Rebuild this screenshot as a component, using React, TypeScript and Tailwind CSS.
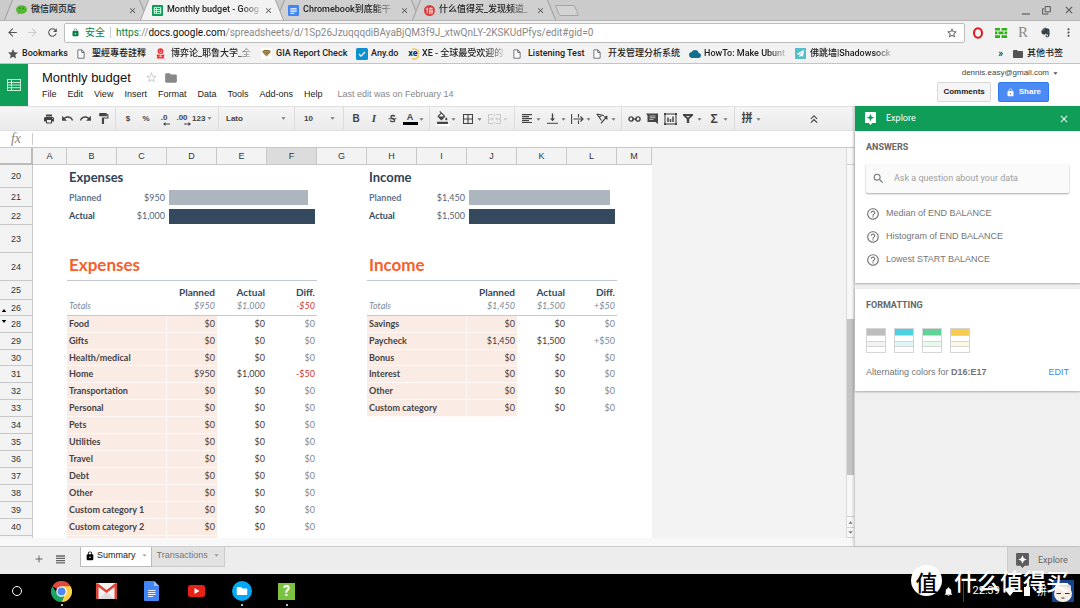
import React from "react";
import {
  MdAdd,
  MdArrowBack,
  MdArrowForward,
  MdClose,
  MdCloud,
  MdFolder,
  MdFormatColorFill,
  MdFormatPaint,
  MdHelpOutline,
  MdKeyboardDoubleArrowUp,
  MdLock,
  MdMoreVert,
  MdNotifications,
  MdPrint,
  MdRedo,
  MdRefresh,
  MdSearch,
  MdStar,
  MdStarBorder,
  MdUndo,
} from "react-icons/md";
import { FaEvernote, FaPaperPlane } from "react-icons/fa";

const chromeFont = "font-[Roboto,'Noto_Sans_CJK_SC',sans-serif]";
const docsFont = "font-['Liberation_Sans','Noto_Sans_CJK_SC',sans-serif]";
const sheetFont = "font-[Lato,sans-serif]";
const fade = "[mask-image:linear-gradient(to_right,black_80%,rgba(0,0,0,0.2))]";

/* ---------- Small drawings ---------- */

function Caret({ className = "text-[#777]" }: { className?: string }) {
  return (
    <svg viewBox="0 0 6 3" className={"h-[3px] w-[5px] shrink-0 fill-current " + className} aria-hidden="true">
      <path d="M0.5 0h5L3 3z" />
    </svg>
  );
}

function WechatIcon() {
  return (
    <svg viewBox="0 0 22 20" className="h-[10px] w-[11px]" aria-hidden="true">
      <ellipse cx="11" cy="9" rx="11" ry="8.5" fill="#54b635" />
      <path d="M4 15l-1 4 6-2z" fill="#54b635" />
      <circle cx="7.5" cy="6.5" r="1.5" fill="#2f6b1c" />
      <circle cx="14.5" cy="6.5" r="1.5" fill="#2f6b1c" />
    </svg>
  );
}

function SheetsFavicon() {
  return (
    <svg viewBox="0 0 12 12" className="size-[11px]" aria-hidden="true">
      <rect width="12" height="12" rx="1" fill="#0f9d58" />
      <path d="M2 2.5h8v7H2z" fill="#fff" />
      <path d="M3 3.4h1.6v1.2H3zM5.4 3.4H9v1.2H5.4zM3 5.4h1.6v1.2H3zM5.4 5.4H9v1.2H5.4zM3 7.4h1.6v1.2H3zM5.4 7.4H9v1.2H5.4z" fill="#0f9d58" />
    </svg>
  );
}

function DocsFavicon() {
  return (
    <svg viewBox="0 0 12 12" className="size-[11px]" aria-hidden="true">
      <rect width="12" height="12" rx="1" fill="#4285f4" />
      <path d="M2.5 3.5h7v1.3h-7zM2.5 6h7v1.3h-7zM2.5 8.5h4.5v1h-4.5z" fill="#fff" />
    </svg>
  );
}

function SealIcon() {
  return (
    <svg viewBox="0 0 12 12" className="size-[11px]" fill="none" stroke="#fff" strokeWidth="0.8" aria-hidden="true">
      <circle cx="6" cy="6" r="6" fill="#d8403f" stroke="none" />
      <path d="M3.5 3v6M2.5 4.5h2M5.5 4h4M6 5.5h3v3.5h-3zM6 7.2h3M7.5 2.5v1.5" />
    </svg>
  );
}

function PageIcon() {
  return (
    <svg viewBox="0 0 9 11" className="h-[10px] w-[8px]" fill="#fff" stroke="#5f6368" strokeWidth="1" aria-hidden="true">
      <path d="M1 0.8h4.5L8 3.5v6.7H1zM5.3 0.8v3H8" />
    </svg>
  );
}

function RedBlob() {
  return (
    <svg viewBox="0 0 10 12" className="h-[11px] w-[9px]" aria-hidden="true">
      <circle cx="5" cy="3.5" r="3.2" fill="#e33" />
      <path d="M0.5 7.5L3 7l2 1.5L7 7l2.5.5L8.5 10l1 1.5h-9l1-1.5z" fill="#e33" />
      <path d="M3.5 3h1M5.7 3h1M3.5 9.5h3M4 5h2" stroke="#fff" strokeWidth="0.8" />
    </svg>
  );
}

function GemIcon() {
  return (
    <svg viewBox="0 0 11 11" className="size-[11px]" aria-hidden="true">
      <rect width="11" height="11" fill="#fff" />
      <path d="M1 3.8L3 2h5l2 1.8L5.5 8.5z" fill="#8a6a2f" />
      <path d="M1 3.8h9M3.7 3.8l1.8 4.5 1.8-4.5" stroke="#d8bd85" strokeWidth="0.5" fill="none" />
    </svg>
  );
}

function AnydoIcon() {
  return (
    <svg viewBox="0 0 12 12" className="size-[12px]" aria-hidden="true">
      <rect width="12" height="12" rx="1.5" fill="#0d8fd0" />
      <path d="M3 6l2 2.2L9 4" fill="none" stroke="#fff" strokeWidth="1.2" />
    </svg>
  );
}

function XeIcon() {
  return (
    <span className="relative flex h-3 w-3 items-center justify-center">
      <svg viewBox="0 0 12 12" className="absolute inset-0" aria-hidden="true">
        <path d="M5 1.5a5 5 0 1 1 0 9" fill="none" stroke="#f0c14b" strokeWidth="1.3" />
      </svg>
      <span className="relative text-[9px] leading-none font-bold text-[#0a2a5e]">xe</span>
    </span>
  );
}

function SheetsMark() {
  return (
    <svg viewBox="0 0 14 12" className="h-[12px] w-[14px]" fill="none" stroke="#c9ecd9" strokeWidth="1" aria-hidden="true">
      <rect x="0.5" y="0.5" width="13" height="11" />
      <path d="M0.5 3.5h13M0.5 6h13M0.5 8.7h13M4.5 0.5v11" />
    </svg>
  );
}

function ExploreMark({ body, star, className }: { body: string; star: string; className: string }) {
  return (
    <svg viewBox="0 0 12 14" className={className} aria-hidden="true">
      <path d="M1 0h10a1 1 0 0 1 1 1v10a1 1 0 0 1-1 1H8l-2 2-2-2H1a1 1 0 0 1-1-1V1a1 1 0 0 1 1-1z" fill={body} />
      <path d="M6 2l1.2 2.8L10 6 7.2 7.2 6 10 4.8 7.2 2 6l2.8-1.2z" fill={star} />
    </svg>
  );
}

function DecimalIcon({ text, back }: { text: string; back: boolean }) {
  return (
    <span className="relative flex h-3 flex-col items-center text-[8px] leading-[9px] font-bold">
      {text}
      <svg viewBox="0 0 7 4" className="absolute right-[-3px] bottom-[-1px] h-[4px] w-[7px] fill-current" aria-hidden="true">
        {back ? <path d="M0 2l2.5-2v1.4H7v1.2H2.5V4z" /> : <path d="M7 2L4.5 0v1.4H0v1.2h4.5V4z" />}
      </svg>
    </span>
  );
}

const stroke = { fill: "none", stroke: "currentColor", strokeWidth: 1.1 } as const;

function StrikeIcon() {
  return (
    <svg viewBox="0 0 10 10" className="size-[9px]" {...stroke} strokeWidth={1.5} aria-hidden="true">
      <path d="M7.5 2.7C7 1.3 3.2 1.3 3.2 3.2S7.3 5.3 7.3 7.1 3.2 8.9 2.5 7.2" />
      <path d="M0.5 5.3h9" strokeWidth={1} />
    </svg>
  );
}

function BordersIcon() {
  return (
    <svg viewBox="0 0 10 10" className="size-[10px]" {...stroke} aria-hidden="true">
      <path d="M0.5 0.5h9v9h-9zM5 0.5v9M0.5 5h9" />
    </svg>
  );
}

function MergeIcon() {
  return (
    <svg viewBox="0 0 13 10" className="h-[10px] w-[13px]" {...stroke} strokeWidth={0.9} aria-hidden="true">
      <path d="M5 0.5H0.5v9H5M8 0.5h4.5v9H8M6.5 0v2M6.5 8v2M1 5h4M12 5H8M3.8 3.5L5.3 5 3.8 6.5M9.2 3.5L7.7 5l1.5 1.5" />
    </svg>
  );
}

function AlignIcon() {
  return (
    <svg viewBox="0 0 10 9" className="h-[9px] w-[10px]" {...stroke} aria-hidden="true">
      <path d="M0 0.6h10M0 2.6h7M0 4.6h10M0 6.6h7M0 8.5h10" />
    </svg>
  );
}

function ValignIcon() {
  return (
    <svg viewBox="0 0 11 11" className="size-[11px]" {...stroke} strokeWidth={1.4} aria-hidden="true">
      <path d="M5.5 0.5v6.5" />
      <path d="M3 5.5h5L5.5 8.3z" fill="currentColor" stroke="none" />
      <path d="M0 10.3h11" strokeWidth={1} />
    </svg>
  );
}

function WrapIcon() {
  return (
    <svg viewBox="0 0 13 10" className="h-[10px] w-[13px]" {...stroke} aria-hidden="true">
      <path d="M0.6 0v10M2.5 5H12M7.5 0v3.5M7.5 6.5V10M9.5 2.5L12 5 9.5 7.5" />
    </svg>
  );
}

function RotateIcon() {
  return (
    <svg viewBox="0 0 12 11" className="h-[11px] w-[12px]" {...stroke} strokeWidth={1.2} aria-hidden="true">
      <path d="M0.8 1L5.5 7.5M0.8 1L8 2.5M3 4.2l3-2M5 10.3l5.5-6.5M7.8 4l3-0.5 0.2 3" />
    </svg>
  );
}

function LinkIcon() {
  return (
    <svg viewBox="0 0 14 8" className="h-[8px] w-[13px]" {...stroke} strokeWidth={1.5} aria-hidden="true">
      <rect x="1" y="1.7" width="4.6" height="4.6" rx="2.3" />
      <rect x="8.4" y="1.7" width="4.6" height="4.6" rx="2.3" />
      <path d="M4.5 4h5" />
    </svg>
  );
}

function CommentIcon() {
  return (
    <svg viewBox="0 0 12 11" className="h-[11px] w-[12px]" aria-hidden="true">
      <path d="M0 0.5h12V11L9.5 9H1.5V2.5z" fill="currentColor" />
      <path d="M3.5 3h6M3.5 4.7h6M3.5 6.4h4" stroke="#ddd" strokeWidth="0.8" />
    </svg>
  );
}

function ChartIcon() {
  return (
    <svg viewBox="0 0 13 12" className="h-[12px] w-[13px]" {...stroke} aria-hidden="true">
      <rect x="1" y="1" width="11" height="10" />
      <path d="M4 9V4.5M6.5 9V6M9 9V3.5" strokeWidth={1.5} />
      <path d="M0 0h2v2H0zM11 0h2v2h-2zM0 10h2v2H0zM11 10h2v2h-2z" fill="currentColor" stroke="none" />
    </svg>
  );
}

function FilterIcon() {
  return (
    <svg viewBox="0 0 10 9" className="h-[9px] w-[10px]" aria-hidden="true">
      <path d="M0 0h10v1.5L6.2 5v4H3.8V5L0 1.5z" fill="currentColor" />
      <path d="M3.2 2h3.6L5 3.8z" fill="#eee" />
    </svg>
  );
}

function OperaIcon() {
  return (
    <svg viewBox="0 0 12 12" className="size-[12px]" aria-hidden="true">
      <ellipse cx="6" cy="6" rx="4" ry="4.8" fill="none" stroke="#e3131b" strokeWidth="2" />
    </svg>
  );
}

function GreenGridIcon() {
  return (
    <svg viewBox="0 0 12 10" className="h-[10px] w-[12px]" aria-hidden="true">
      <path d="M0 0h5v2.6H0zM6.5 0H12v2.6H6.5zM0 3.6h2.5v2.6H0zM3.5 3.6h5v2.6h-5zM9.5 3.6H12v2.6H9.5zM0 7.2h5V10H0zM6.5 7.2H12V10H6.5z" fill="#2cb512" />
    </svg>
  );
}

/* ---------- Browser frame ---------- */

type Tab = { title: string; icon: React.ReactNode; active?: boolean };

const browserTabs: Tab[] = [
  { title: "微信网页版", icon: <WechatIcon /> },
  { title: "Monthly budget - Goog", icon: <SheetsFavicon />, active: true },
  { title: "Chromebook到底能干", icon: <DocsFavicon /> },
  { title: "什么值得买_发现频道_", icon: <SealIcon /> },
];

function BrowserTab({ title, icon, active }: Tab) {
  const side = active ? "before:bg-[#f2f2f2] after:bg-[#f2f2f2]" : "before:bg-[#d0d0d0] after:bg-[#d0d0d0]";
  return (
    <div
      className={
        "relative flex h-full w-[136px] items-center pr-[7px] pl-[8px] before:absolute before:inset-y-0 before:left-0 before:w-2/3 before:-skew-x-[22deg] before:border-l before:border-[#9c9c9c] after:absolute after:inset-y-0 after:right-0 after:w-2/3 after:skew-x-[22deg] after:border-r after:border-[#9c9c9c] " +
        side +
        (active ? " z-10" : "")
      }
    >
      <span className="relative z-10 mr-1 flex shrink-0">{icon}</span>
      <span className={"relative z-10 shrink-0 whitespace-nowrap text-[#222] " + (title.length > 5 ? fade : "")}>{title}</span>
      <button type="button" aria-label={"Close " + title} className="relative z-10 ml-auto text-[#555]">
        <MdClose className="size-[9px]" />
      </button>
    </div>
  );
}

function TabStrip() {
  return (
    <div className="flex h-[21px] shrink-0 items-stretch border-b border-[#b5b5b5] bg-[#cbcbcb] pl-2 text-[9px] font-medium">
      {browserTabs.map((t) => (
        <BrowserTab key={t.title} {...t} />
      ))}
      <button
        type="button"
        aria-label="New tab"
        className="ml-[5px] h-[11px] w-[20px] skew-x-[22deg] self-center rounded-xs border border-[#a5a5a5] bg-[#d3d3d3]"
      />
      <div className="ml-auto flex items-center gap-3 pr-[5px] text-[#555]">
        <button type="button" aria-label="Minimize" className="mt-[7px] h-[2px] w-[8px] bg-[#888]" />
        <button type="button" aria-label="Restore">
          <svg viewBox="0 0 10 10" className="size-[9px]" {...stroke} aria-hidden="true">
            <path d="M3.5 0.7h5.8v5.8H3.5zM2 3H0.7v6H6.5V8" />
          </svg>
        </button>
        <button type="button" aria-label="Close window">
          <MdClose className="size-[12px]" />
        </button>
      </div>
    </div>
  );
}

function AddressBar() {
  return (
    <div className="flex h-[23px] shrink-0 items-center bg-[#f2f2f2] pl-[6px] text-[#555]">
      <button type="button" aria-label="Back" className="w-[14px]">
        <MdArrowBack className="size-[13px]" />
      </button>
      <button type="button" aria-label="Forward" className="ml-[6px] w-[14px] text-[#ccc]">
        <MdArrowForward className="size-[13px]" />
      </button>
      <button type="button" aria-label="Reload" className="ml-[6px] w-[14px]">
        <MdRefresh className="size-[13px]" />
      </button>
      <div className="ml-1 flex h-[20px] min-w-0 flex-1 items-center rounded-xs border border-[#bdbdbd] bg-white px-[6px] text-[10px]">
        <MdLock className="size-[9px] shrink-0 text-[#0b8043]" />
        <span className="ml-[5px] shrink-0 text-[#0b8043]">安全</span>
        <span className="mx-[5px] h-[11px] w-px shrink-0 bg-[#ccc]" />
        <span className="min-w-0 flex-1 truncate text-[#888]">
          <span className="text-[#0b8043]">https</span>://<span className="text-[#111]">docs.google.com</span>
          /spreadsheets/d/1Sp26JzuqqqdiBAyaBjQM3f9J_xtwQnLY-2KSKUdPfys/edit#gid=0
        </span>
        <MdStarBorder className="size-[12px] shrink-0" />
      </div>
      <div className="flex items-center pl-[1px]">
        <button type="button" aria-label="Opera extension" className="flex w-[23px] justify-center">
          <OperaIcon />
        </button>
        <button type="button" aria-label="Grid extension" className="flex w-[23px] justify-center">
          <GreenGridIcon />
        </button>
        <button type="button" aria-label="Reader extension" className="w-[22px] font-['Liberation_Serif',serif] text-[15px] leading-none text-[#888]">
          R
        </button>
        <button type="button" aria-label="Evernote" className="flex w-[23px] justify-center text-[#333f44]">
          <FaEvernote className="size-[11px]" />
        </button>
        <button type="button" aria-label="Menu" className="flex w-[23px] justify-center">
          <MdMoreVert className="size-[13px]" />
        </button>
      </div>
    </div>
  );
}

const bookmarks: { title: string; icon: React.ReactNode; width: string; faded?: boolean }[] = [
  { title: "Bookmarks", icon: <MdStar className="size-[12px] text-[#555]" />, width: "w-[70px]" },
  { title: "聖經專卷註釋", icon: <PageIcon />, width: "w-[79px]" },
  { title: "博弈论_耶鲁大学_全", icon: <RedBlob />, width: "w-[105px]", faded: true },
  { title: "GIA Report Check", icon: <GemIcon />, width: "w-[95px]" },
  { title: "Any.do", icon: <AnydoIcon />, width: "w-[51px]" },
  { title: "XE - 全球最受欢迎的", icon: <XeIcon />, width: "w-[106px]", faded: true },
  { title: "Listening Test", icon: <PageIcon />, width: "w-[80px]" },
  { title: "开发管理分析系统", icon: <PageIcon />, width: "w-[96px]" },
  { title: "HowTo: Make Ubunt", icon: <MdCloud className="size-[12px] text-[#14708a]" />, width: "w-[106px]", faded: true },
  {
    title: "佛跳墙|Shadowsock",
    icon: (
      <span className="flex size-[11px] items-center justify-center bg-[#54bfc9] text-white">
        <FaPaperPlane className="size-[7px]" />
      </span>
    ),
    width: "w-[96px]",
    faded: true,
  },
];

function BookmarksBar() {
  return (
    <nav
      aria-label="Bookmarks"
      className="flex h-[20px] shrink-0 items-center border-b border-[#c4c4c4] bg-[#f2f2f2] pl-[7px] text-[9px] font-medium text-[#222]"
    >
      {bookmarks.map((b) => (
        <a key={b.title} href="#" className={"flex shrink-0 items-center " + b.width}>
          <span className="flex w-[15px] shrink-0">{b.icon}</span>
          <span className={"whitespace-nowrap " + (b.faded ? fade : "")}>{b.title}</span>
        </a>
      ))}
      <div className="ml-auto flex items-center pr-[17px]">
        <button type="button" aria-label="More bookmarks" className="mr-[9px] text-[10px] leading-none">
          »
        </button>
        <button type="button" className="flex items-center gap-[3px]">
          <MdFolder className="size-[12px] text-[#555]" />
          其他书签
        </button>
      </div>
    </nav>
  );
}

/* ---------- Document header and toolbar ---------- */

function DocHeader() {
  return (
    <header className="flex h-[42px] shrink-0 bg-white">
      <a href="#" aria-label="Sheets home" className="flex w-[28px] items-center justify-center bg-[#0f9d58]">
        <SheetsMark />
      </a>
      <div className="flex flex-1 flex-col pt-[5px] pl-[14px]">
        <div className="flex items-center">
          <h1 className="text-[13px] leading-[17px] text-[#111]">Monthly budget</h1>
          <button type="button" aria-label="Star" className="ml-[14px] text-[#ccc]">
            <MdStarBorder className="size-[13px]" />
          </button>
          <button type="button" aria-label="Move to folder" className="ml-[6px] text-[#888]">
            <MdFolder className="size-[14px]" />
          </button>
        </div>
        <nav aria-label="Menu bar" className="flex gap-[11px] text-[9px] leading-[16px] text-[#222]">
          {["File", "Edit", "View", "Insert", "Format", "Data", "Tools", "Add-ons", "Help"].map((m) => (
            <button key={m} type="button">
              {m}
            </button>
          ))}
          <a href="#" className="ml-[4px] text-[#888]">
            Last edit was on February 14
          </a>
        </nav>
      </div>
      <div className="flex flex-col items-end text-[8px]">
        <button type="button" className="flex items-center gap-1 pt-[2px] pr-[22px] leading-[14px] text-[#444]">
          dennis.easy@gmail.com <Caret className="text-[#555]" />
        </button>
        <div className="mt-[2px] flex gap-[7px] pr-[31px] font-bold">
          <button type="button" className="h-5 rounded-xs border border-[#d8d8d8] bg-[#f5f5f5] px-[5px] text-[#222]">
            Comments
          </button>
          <button type="button" className="flex h-5 items-center gap-1 rounded-xs border border-[#3079ed] bg-[#4c8bf5] px-[7px] text-white">
            <MdLock className="size-[9px]" />
            Share
          </button>
        </div>
      </div>
    </header>
  );
}

function Tool({ label, children, disabled }: { label: string; children: React.ReactNode; disabled?: boolean }) {
  return (
    <button type="button" aria-label={label} className={"flex w-[18px] shrink-0 items-center justify-center " + (disabled ? "text-[#c4c4c4]" : "")}>
      {children}
    </button>
  );
}

function DropTool({ label, children, disabled, wide }: { label: string; children: React.ReactNode; disabled?: boolean; wide?: boolean }) {
  return (
    <button
      type="button"
      aria-label={label}
      className={"flex shrink-0 items-center " + (wide ? "w-[26px] " : "w-[25px] ") + (disabled ? "text-[#c4c4c4]" : "")}
    >
      <span className="flex w-[18px] items-center justify-center">{children}</span>
      <Caret className={disabled ? "mt-[2px] text-[#ccc]" : "mt-[2px] text-[#777]"} />
    </button>
  );
}

function Sep() {
  return <span className="mx-[3px] w-px shrink-0 self-stretch bg-[#dcdcdc]" />;
}

function Picker({ label, value, options, className }: { label: string; value: string; options: string[]; className: string }) {
  return (
    <span className={"relative flex shrink-0 items-center " + className}>
      <select aria-label={label} defaultValue={value} className="w-full appearance-none bg-transparent pl-1 text-[8px] font-bold outline-none">
        {options.map((o) => (
          <option key={o}>{o}</option>
        ))}
      </select>
      <span className="pointer-events-none absolute right-[5px]">
        <Caret />
      </span>
    </span>
  );
}

function Toolbar() {
  return (
    <div
      role="toolbar"
      aria-label="Formatting"
      className="flex h-[25px] shrink-0 items-center overflow-hidden border-t border-b border-[#e0e0e0] bg-linear-to-b from-[#f5f5f5] to-[#ebebeb] pl-[40px] text-[8px] font-bold text-[#444]"
    >
      <Tool label="Print"><MdPrint className="size-[12px]" /></Tool>
      <Tool label="Undo"><MdUndo className="size-[13px]" /></Tool>
      <Tool label="Redo"><MdRedo className="size-[13px]" /></Tool>
      <Tool label="Paint format"><MdFormatPaint className="size-[13px]" /></Tool>
      <Sep />
      <Tool label="Format as currency">$</Tool>
      <Tool label="Format as percent">%</Tool>
      <Tool label="Decrease decimal places"><DecimalIcon text=".0" back /></Tool>
      <Tool label="Increase decimal places"><DecimalIcon text=".00" back={false} /></Tool>
      <button type="button" className="flex w-6 shrink-0 items-center gap-[2px] pl-[1px]">
        123 <Caret />
      </button>
      <Sep />
      <Picker label="Font" value="Lato" options={["Lato", "Arial", "Raleway"]} className="w-[69px]" />
      <Sep />
      <Picker label="Font size" value="10" options={["8", "10", "12"]} className="w-[42px] pl-[2px]" />
      <Sep />
      <Tool label="Bold"><span className="text-[10px] leading-none">B</span></Tool>
      <Tool label="Italic"><span className="font-['Liberation_Serif',serif] text-[11px] leading-none italic">I</span></Tool>
      <Tool label="Strikethrough"><StrikeIcon /></Tool>
      <DropTool label="Text color">
        <span className="flex flex-col items-center">
          <span className="text-[9px] leading-[10px]">A</span>
          <span className="h-[3px] w-[15px] bg-black" />
        </span>
      </DropTool>
      <Sep />
      <DropTool label="Fill color" wide>
        <span className="flex flex-col items-center">
          <MdFormatColorFill className="size-[13px]" />
          <span className="h-[2px] w-[15px] bg-white" />
        </span>
      </DropTool>
      <DropTool label="Borders" wide><BordersIcon /></DropTool>
      <DropTool label="Merge cells" wide disabled><MergeIcon /></DropTool>
      <Sep />
      <DropTool label="Horizontal align"><AlignIcon /></DropTool>
      <DropTool label="Vertical align"><ValignIcon /></DropTool>
      <DropTool label="Text wrapping"><WrapIcon /></DropTool>
      <DropTool label="Text rotation"><RotateIcon /></DropTool>
      <Sep />
      <Tool label="Insert link"><LinkIcon /></Tool>
      <Tool label="Insert comment"><CommentIcon /></Tool>
      <Tool label="Insert chart"><ChartIcon /></Tool>
      <DropTool label="Filter" wide><FilterIcon /></DropTool>
      <DropTool label="Functions" wide><span className="text-[12px] leading-none">Σ</span></DropTool>
      <Sep />
      <DropTool label="Input tools" wide><span className="text-[11px] leading-none">拼</span></DropTool>
      <button type="button" aria-label="Hide menus" className="mr-[33px] ml-auto">
        <MdKeyboardDoubleArrowUp className="size-[14px]" />
      </button>
    </div>
  );
}

function FormulaBar() {
  return (
    <div className="flex h-[17px] shrink-0 items-center border-b border-[#c8c8c8] bg-white">
      <label htmlFor="formula" className="w-8 text-center font-['Liberation_Serif',serif] text-[14px] leading-none text-[#888] italic">
        fx
      </label>
      <span className="h-3 w-px bg-[#ccc]" />
      <input id="formula" className="min-w-0 flex-1 px-1 text-[9px] outline-none" />
    </div>
  );
}

/* ---------- Spreadsheet ---------- */

type BlockRow =
  | { kind: "empty" }
  | { kind: "subtitle"; text: string }
  | { kind: "title"; text: string }
  | { kind: "bar"; label: string; value: string; share: number; strong: boolean }
  | { kind: "head" }
  | { kind: "totals"; values: [string, string, string]; negative?: boolean }
  | { kind: "item"; label: string; values: [string, string, string]; negative?: boolean }
  | { kind: "tail" };

const zero: [string, string, string] = ["$0", "$0", "$0"];
const item = (label: string, values = zero, negative = false): BlockRow => ({ kind: "item", label, values, negative });
const empty: BlockRow = { kind: "empty" };

const rows: { n: number | null; h: string; left: BlockRow; right: BlockRow }[] = [
  { n: 20, h: "h-[23px]", left: { kind: "subtitle", text: "Expenses" }, right: { kind: "subtitle", text: "Income" } },
  {
    n: 21,
    h: "h-[19px]",
    left: { kind: "bar", label: "Planned", value: "$950", share: 95, strong: false },
    right: { kind: "bar", label: "Planned", value: "$1,450", share: 96.7, strong: false },
  },
  {
    n: 22,
    h: "h-[18px]",
    left: { kind: "bar", label: "Actual", value: "$1,000", share: 100, strong: true },
    right: { kind: "bar", label: "Actual", value: "$1,500", share: 100, strong: true },
  },
  { n: 23, h: "h-[28px]", left: empty, right: empty },
  { n: 24, h: "h-[28px]", left: { kind: "title", text: "Expenses" }, right: { kind: "title", text: "Income" } },
  { n: 25, h: "h-[19px]", left: { kind: "head" }, right: { kind: "head" } },
  {
    n: 26,
    h: "h-[16px]",
    left: { kind: "totals", values: ["$950", "$1,000", "-$50"], negative: true },
    right: { kind: "totals", values: ["$1,450", "$1,500", "+$50"] },
  },
  { n: 28, h: "h-[17px]", left: item("Food"), right: item("Savings") },
  { n: 29, h: "h-[17px]", left: item("Gifts"), right: item("Paycheck", ["$1,450", "$1,500", "+$50"]) },
  { n: 30, h: "h-[16px]", left: item("Health/medical"), right: item("Bonus") },
  { n: 31, h: "h-[17px]", left: item("Home", ["$950", "$1,000", "-$50"], true), right: item("Interest") },
  { n: 32, h: "h-[17px]", left: item("Transportation"), right: item("Other") },
  { n: 33, h: "h-[17px]", left: item("Personal"), right: item("Custom category") },
  { n: 34, h: "h-[17px]", left: item("Pets"), right: empty },
  { n: 35, h: "h-[17px]", left: item("Utilities"), right: empty },
  { n: 36, h: "h-[17px]", left: item("Travel"), right: empty },
  { n: 37, h: "h-[17px]", left: item("Debt"), right: empty },
  { n: 38, h: "h-[17px]", left: item("Other"), right: empty },
  { n: 39, h: "h-[17px]", left: item("Custom category 1"), right: empty },
  { n: 40, h: "h-[17px]", left: item("Custom category 2"), right: empty },
  { n: null, h: "h-[17px]", left: { kind: "tail" }, right: empty },
];

function Block({ row }: { row: BlockRow }) {
  switch (row.kind) {
    case "subtitle":
      return (
        <td colSpan={5} className="pl-[2px] text-[13px] leading-4 font-bold text-[#2f4358]">
          {row.text}
        </td>
      );
    case "title":
      return (
        <td colSpan={5} className="border-b border-[#c3c7d4] pb-[5px] pl-[2px] align-bottom text-[17px] leading-5 font-bold text-[#f4612a]">
          {row.text}
        </td>
      );
    case "bar":
      return (
        <>
          <td className={"pl-[2px] font-bold " + (row.strong ? "text-[#34495e]" : "text-[#64748a]")}>{row.label}</td>
          <td className="pr-[2px] text-right text-[#54667a]">{row.value}</td>
          <td colSpan={3} className="px-[2px]">
            <div className={"h-[15px] " + (row.strong ? "bg-[#34495e]" : "bg-[#adb5be]")} style={{ width: row.share + "%" }} />
          </td>
        </>
      );
    case "head":
      return (
        <>
          <td colSpan={2} />
          {["Planned", "Actual", "Diff."].map((h) => (
            <td key={h} className="pr-[2px] pb-[1px] text-right align-bottom text-[10px] leading-[14px] font-bold text-[#34495e]">
              {h}
            </td>
          ))}
        </>
      );
    case "totals":
      return (
        <>
          <td colSpan={2} className="border-b border-[#c3c7d4] pb-[3px] pl-[2px] text-[#7d8b9a] italic">
            Totals
          </td>
          {row.values.map((v, i) => (
            <td
              key={i}
              className={"border-b border-[#c3c7d4] pr-[2px] pb-[3px] text-right italic " + (row.negative && i === 2 ? "text-[#d5392b]" : "text-[#7d8b9a]")}
            >
              {v}
            </td>
          ))}
        </>
      );
    case "item":
      return (
        <>
          <td colSpan={2} className="border-r border-b border-[#fffaf8] bg-[#fbebe5] pl-[2px] font-bold text-[#434343]">
            {row.label}
          </td>
          <td className="border-b border-[#fffaf8] bg-[#fbebe5] pr-[2px] text-right text-[#434343]">{row.values[0]}</td>
          <td className="border-b border-white pr-[2px] text-right text-[#434343]">{row.values[1]}</td>
          <td className={"border-b border-white pr-[2px] text-right " + (row.negative ? "text-[#d5392b]" : "text-[#7d8b9a]")}>{row.values[2]}</td>
        </>
      );
    case "tail":
      return (
        <>
          <td colSpan={2} className="border-r border-[#fffaf8] bg-[#fbebe5]" />
          <td className="bg-[#fbebe5]" />
          <td colSpan={2} />
        </>
      );
    default:
      return <td colSpan={5} />;
  }
}

function Grid() {
  return (
    <div className="min-w-0 flex-1 overflow-hidden bg-[#f3f3f3]">
      <table className={"w-[652px] table-fixed border-separate border-spacing-0 bg-white text-[9px] leading-3 whitespace-nowrap " + sheetFont}>
        <colgroup>
          <col className="w-[33px]" />
          <col className="w-[34px]" />
          {"BCDEFGHIJKL".split("").map((c) => (
            <col key={c} className="w-[50px]" />
          ))}
          <col className="w-[35px]" />
        </colgroup>
        <thead className={docsFont}>
          <tr className="h-[17px]">
            <td className="border-r-2 border-b-2 border-[#bcbcbc] bg-[#f3f3f3]" />
            {"ABCDEFGHIJKLM".split("").map((c) => (
              <th
                key={c}
                scope="col"
                className={"border-r border-b border-[#c8c8c8] font-normal text-[#333] " + (c === "F" ? "bg-[#dcdcdc]" : "bg-[#f3f3f3]")}
              >
                {c}
              </th>
            ))}
          </tr>
        </thead>
        <tbody>
          {rows.map((r) => (
            <tr key={r.n ?? "next"} className={r.h}>
              <th scope="row" className={"relative border-r border-b border-[#c8c8c8] bg-[#f3f3f3] font-normal text-[#333] " + docsFont}>
                {r.n}
                {r.n === 26 && (
                  <svg viewBox="0 0 6 4" className="absolute bottom-[3px] left-[1px] h-[3px] w-[6px]" aria-hidden="true">
                    <path d="M0 4h6L3 0z" />
                  </svg>
                )}
                {r.n === 28 && (
                  <svg viewBox="0 0 6 4" className="absolute top-[4px] left-[1px] h-[3px] w-[6px]" aria-hidden="true">
                    <path d="M0 0h6L3 4z" />
                  </svg>
                )}
              </th>
              <td />
              <Block row={r.left} />
              <td />
              <Block row={r.right} />
              <td />
            </tr>
          ))}
        </tbody>
      </table>
    </div>
  );
}

function VerticalScroll() {
  return (
    <div className="flex w-2 shrink-0 flex-col border-l border-[#dadada] bg-[#f8f8f8]">
      <span className="h-[17px] border-b border-[#d0d0d0]" />
      <span className="flex-[154]" />
      <span className="flex-[157] bg-[#c4c4c4]" />
      <span className="flex-[41]" />
      <button type="button" aria-label="Scroll up" className="flex h-[11px] items-center justify-center border-t border-[#d0d0d0]">
        <span className="rotate-180">
          <Caret />
        </span>
      </button>
      <button type="button" aria-label="Scroll down" className="flex h-[11px] items-center justify-center border-y border-[#d0d0d0]">
        <Caret />
      </button>
    </div>
  );
}

/* ---------- Explore panel ---------- */

const swatches = [
  { head: "bg-[#bdbdbd]", band: "bg-[#f3f3f3]" },
  { head: "bg-[#4dd0e1]", band: "bg-[#e0f7fa]" },
  { head: "bg-[#63d297]", band: "bg-[#e7f9ef]" },
  { head: "bg-[#f7cb4d]", band: "bg-[#fef8e3]" },
];

function ExplorePanel() {
  return (
    <aside className="relative z-10 flex w-[226px] shrink-0 flex-col border-l border-[#d0d0d0] bg-[#f0f0f0] text-[9px] text-[#757575] shadow-[-1px_0_2px_rgba(0,0,0,0.15)]">
      <div className={"flex h-[25px] shrink-0 items-center bg-[#0f9d58] pr-[10px] pl-[10px] text-white " + chromeFont}>
        <ExploreMark body="#fff" star="#0f9d58" className="h-[13px] w-[11px]" />
        <h2 className="ml-[10px]">Explore</h2>
        <button type="button" aria-label="Close Explore" className="ml-auto">
          <MdClose className="size-[12px]" />
        </button>
      </div>
      <section className="bg-white px-[11px] pt-[10px] pb-[12px] shadow-[0_1px_2px_rgba(0,0,0,0.3)]">
        <h3 className={"leading-3 font-bold text-[#666] " + chromeFont}>ANSWERS</h3>
        <div className="mt-[11px] flex h-[29px] items-center rounded-xs bg-[#fafafa] pl-[6px] shadow-[0_1px_2px_rgba(0,0,0,0.35)]">
          <MdSearch className="size-[13px] shrink-0" />
          <input
            aria-label="Ask a question about your data"
            placeholder="Ask a question about your data"
            className={"ml-[9px] min-w-0 flex-1 bg-transparent outline-none placeholder:text-[#a0a0a0] " + chromeFont}
          />
        </div>
        <ul className="mt-[9px]">
          {["Median of END BALANCE", "Histogram of END BALANCE", "Lowest START BALANCE"].map((q) => (
            <li key={q}>
              <a href="#" className="flex h-[23px] items-center gap-[6px]">
                <MdHelpOutline className="size-[14px]" />
                {q}
              </a>
            </li>
          ))}
        </ul>
      </section>
      <section className="mt-[6px] bg-white px-[11px] pt-[10px] pb-[13px] shadow-[0_1px_2px_rgba(0,0,0,0.3)]">
        <h3 className={"leading-3 font-bold text-[#666] " + chromeFont}>FORMATTING</h3>
        <div className="mt-[17px] flex gap-2">
          {swatches.map((s) => (
            <button key={s.head} type="button" aria-label="Apply alternating colors" className="flex h-[25px] w-5 flex-col border border-[#d5d5d5]">
              <span className={"h-[6px] w-full " + s.head} />
              <span className="w-full flex-1 border-t border-[#d5d5d5]" />
              <span className={"w-full flex-1 border-t border-[#d5d5d5] " + s.band} />
              <span className="w-full flex-1 border-t border-[#d5d5d5]" />
            </button>
          ))}
        </div>
        <div className="mt-[13px] flex items-center justify-between leading-3">
          <p>
            Alternating colors for <b>D16:E17</b>
          </p>
          <button type="button" className="text-[#4285f4]">
            EDIT
          </button>
        </div>
      </section>
    </aside>
  );
}

/* ---------- Sheet tabs and shelf ---------- */

function SheetTabs() {
  return (
    <footer className="flex h-[28px] shrink-0 border-t border-[#ccc] bg-[#ededed] pl-[32px] text-[9px] text-[#666]">
      <button type="button" aria-label="Add sheet" className="flex h-[24px] w-[14px] items-center justify-center">
        <MdAdd className="size-[12px]" />
      </button>
      <button type="button" aria-label="All sheets" className="ml-[7px] flex h-[24px] w-[14px] items-center justify-center">
        <svg viewBox="0 0 9 9" className="size-[9px]" {...stroke} strokeWidth={1.3} aria-hidden="true">
          <path d="M0 1h9M0 3.3h9M0 5.6h9M0 7.9h9" />
        </svg>
      </button>
      <button type="button" className="ml-[13px] flex h-[20px] items-center border border-t-0 border-[#bbb] bg-white px-[4px] pb-[2px] text-[#222]">
        <MdLock className="mr-[2px] size-[10px] text-black" />
        Summary
        <Caret className="ml-[6px] text-[#aaa]" />
      </button>
      <button type="button" className="flex h-[20px] items-center border border-t-0 border-l-0 border-[#ccc] bg-[#e2e2e2] px-[5px] pb-[2px] text-[#777]">
        Transactions
        <Caret className="ml-[6px] text-[#999]" />
      </button>
      <button type="button" className={"ml-auto flex w-[73px] items-center border-l border-[#ccc] bg-[#dadada] pl-[8px] " + chromeFont}>
        <ExploreMark body="#5c5c5c" star="#fff" className="h-[15px] w-[13px]" />
        <span className="ml-[9px]">Explore</span>
      </button>
    </footer>
  );
}

function ChromeLogo() {
  return (
    <svg viewBox="0 0 42 42" className="size-[21px]" aria-hidden="true">
      <path d="M21 21L2.81 10.5A21 21 0 0 1 39.19 10.5z" fill="#dd4b3e" />
      <path d="M39.19 10.5A21 21 0 0 1 21 42L30 21 21 10.5z" fill="#fdd04b" />
      <path d="M21 42A21 21 0 0 1 2.81 10.5L13 26l13 5z" fill="#1ea362" />
      <circle cx="21" cy="21" r="10.5" fill="#fff" />
      <circle cx="21" cy="21" r="8" fill="#4a89f3" />
    </svg>
  );
}

const apps: { name: string; icon: React.ReactNode; open?: boolean }[] = [
  { name: "Chrome", icon: <ChromeLogo />, open: true },
  {
    name: "Gmail",
    icon: (
      <svg viewBox="0 0 42 32" className="h-[16px] w-[21px]" aria-hidden="true">
        <rect width="42" height="32" rx="2" fill="#f2f2f2" />
        <path d="M6 32L21 17l15 15z" fill="#dcdcdc" />
        <path d="M0 2v28a2 2 0 0 0 2 2h3V8l16 12L37 8v24h3a2 2 0 0 0 2-2V2l-3-2-18 14L3 0z" fill="#db4437" />
      </svg>
    ),
  },
  {
    name: "Docs",
    icon: (
      <svg viewBox="0 0 30 40" className="h-[20px] w-[15px]" aria-hidden="true">
        <path d="M2 0h18l10 10v28a2 2 0 0 1-2 2H2a2 2 0 0 1-2-2V2a2 2 0 0 1 2-2z" fill="#4285f4" />
        <path d="M20 0l10 10H20z" fill="#a1c2fa" />
        <path d="M8 18h15v2H8zM8 22h15v2H8zM8 26h15v2H8zM8 30h10v2H8z" fill="#e8f0fe" />
      </svg>
    ),
  },
  {
    name: "YouTube",
    icon: (
      <svg viewBox="0 0 34 24" className="h-[12px] w-[17px]" aria-hidden="true">
        <rect width="34" height="24" rx="5" fill="#e62117" />
        <path d="M13 6l10 6-10 6z" fill="#fff" />
      </svg>
    ),
  },
  {
    name: "Files",
    open: true,
    icon: (
      <svg viewBox="0 0 40 40" className="size-[20px]" aria-hidden="true">
        <circle cx="20" cy="20" r="20" fill="#03a9f4" />
        <path d="M11 12h7l3 3h8a1.5 1.5 0 0 1 1.5 1.5v10A1.5 1.5 0 0 1 29 28H11a1.5 1.5 0 0 1-1.5-1.5v-13A1.5 1.5 0 0 1 11 12z" fill="#fff" />
      </svg>
    ),
  },
  {
    name: "Get Help",
    open: true,
    icon: (
      <span className="flex size-[17px] items-center justify-center bg-[#7cc242] text-[14px] leading-none font-bold text-white">?</span>
    ),
  },
];

function Shelf() {
  return (
    <div className={"relative flex h-[34px] shrink-0 items-stretch bg-black text-white " + chromeFont}>
      <button type="button" aria-label="Launcher" className="ml-[6px] flex w-[22px] items-center justify-center">
        <span className="size-[10px] rounded-full border border-white" />
      </button>
      <div className="ml-[11px] flex">
        {apps.map((a) => (
          <button key={a.name} type="button" aria-label={a.name} className="relative flex w-[45px] items-center justify-center">
            {a.icon}
            {a.open && <span className="absolute bottom-[2px] size-[2px] rounded-full bg-white" />}
          </button>
        ))}
      </div>
      <div className="ml-auto flex items-center pr-[6px] text-[11px]">
        <MdNotifications className="size-[11px]" />
        <span className="mx-[9px] h-[22px] w-px bg-[#444]" />
        <span>22:39</span>
        <svg viewBox="0 0 12 10" className="ml-[4px] h-[9px] w-[12px]" aria-hidden="true">
          <path d="M0 2.5Q6-2 12 2.5L6 10z" fill="#fff" />
        </svg>
        <svg viewBox="0 0 6 10" className="ml-[8px] h-[10px] w-[6px]" aria-hidden="true">
          <path d="M2 0h2v1h2v9H0V1h2z" fill="#fff" />
        </svg>
        <span className="mr-[5px] ml-[7px] text-[10px]">拼</span>
        <svg viewBox="0 0 22 22" className="size-[22px]" aria-hidden="true">
          <rect width="22" height="22" fill="#15458f" />
          <path d="M3 6C6 2 16 2 19 6v6H3z" fill="#d9dde6" />
          <ellipse cx="11" cy="14" rx="9" ry="8" fill="#f6efe6" />
          <path d="M4.5 13.5h4.5M13 13.5h4.5M9.5 18h3" stroke="#333" strokeWidth="1" />
        </svg>
      </div>
      <div className="pointer-events-none absolute right-[11px] bottom-[12px] flex items-center gap-[12px] font-['Noto_Sans_CJK_SC',sans-serif]">
        <span className="flex size-[31px] items-center justify-center rounded-full bg-white text-[22px] leading-none font-medium text-black">值</span>
        <span className="text-[23px] leading-none font-medium">什么值得买</span>
      </div>
    </div>
  );
}

export default function App() {
  return (
    <div className={"flex h-screen flex-col overflow-hidden bg-white " + docsFont}>
      <div className={"shrink-0 " + chromeFont}>
        <TabStrip />
        <AddressBar />
        <BookmarksBar />
      </div>
      <DocHeader />
      <div className="flex min-h-0 flex-1">
        <main className="flex min-w-0 flex-1 flex-col">
          <Toolbar />
          <FormulaBar />
          <div className="flex min-h-0 flex-1">
            <Grid />
            <VerticalScroll />
          </div>
          <div className="h-2 shrink-0 bg-[#f8f8f8]" />
        </main>
        <ExplorePanel />
      </div>
      <SheetTabs />
      <Shelf />
    </div>
  );
}
